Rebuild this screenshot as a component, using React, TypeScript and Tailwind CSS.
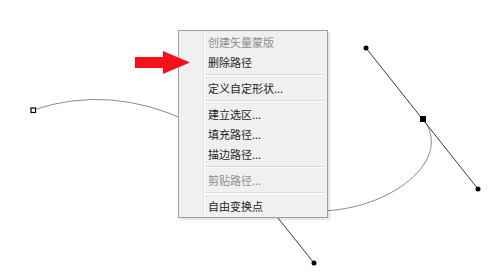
import React from "react";

type Item = { label: string; disabled?: boolean } | { sep: true };

const items: Item[] = [
  { label: "创建矢量蒙版", disabled: true },
  { label: "删除路径" },
  { sep: true },
  { label: "定义自定形状..." },
  { sep: true },
  { label: "建立选区..." },
  { label: "填充路径..." },
  { label: "描边路径..." },
  { sep: true },
  { label: "剪贴路径...", disabled: true },
  { sep: true },
  { label: "自由变换点" },
];

export default function App() {
  return (
    <div
      className="relative w-[500px] h-[278px] overflow-hidden bg-white"
      style={{ fontFamily: '"Noto Sans CJK SC", "Noto Sans", sans-serif' }}
    >
      {/* canvas drawing */}
      <svg className="absolute inset-0" width="500" height="278" viewBox="0 0 500 278">
        <path d="M 33 110 Q 110 84 190 122" fill="none" stroke="#8a8a8a" strokeWidth="1" />
        <path d="M 320 211 C 390 210, 455 160, 423 119" fill="none" stroke="#8a8a8a" strokeWidth="1" />
        <line x1="366" y1="48" x2="478" y2="189" stroke="#3a3a3a" strokeWidth="1" />
        <line x1="250" y1="183" x2="314" y2="263" stroke="#3a3a3a" strokeWidth="1" />
        <circle cx="366" cy="48" r="2.5" fill="#000" />
        <circle cx="478" cy="189" r="2.5" fill="#000" />
        <circle cx="314" cy="263" r="2.5" fill="#000" />
        <rect x="31" y="108" width="4.5" height="4.5" fill="#fff" stroke="#000" strokeWidth="1.2" />
        <rect x="420" y="116" width="6" height="6" fill="#000" />
      </svg>

      {/* context menu */}
      <div className="absolute left-[178px] top-[30px] w-[150px] border border-[#a0a0a0] bg-[#f0f0f0] py-[1px] pl-[1px] pr-[1px] shadow-[2px_2px_2px_rgba(0,0,0,0.12)]">
        <div className="flex">
          <div className="w-[24px] shrink-0 border-r border-[#e2e2e2]" />
          <div className="flex-1 border-l border-white">
            {items.map((it, i) =>
              "sep" in it ? (
                <div key={i} className="h-[6px] flex flex-col justify-center pr-[1px]">
                  <div className="h-[1px] bg-[#dadada]" />
                  <div className="h-[1px] bg-white" />
                </div>
              ) : (
                <div
                  key={i}
                  className={`h-[20px] flex items-center pl-[3px] text-[11px] leading-none ${
                    it.disabled ? "text-[#8e8e8e]" : "text-[#1e1e1e]"
                  }`}
                >
                  {it.label}
                </div>
              )
            )}
          </div>
        </div>
      </div>

      {/* red arrow */}
      <svg className="absolute left-0 top-0" width="500" height="278" viewBox="0 0 500 278">
        <polygon points="135,57 163,57 163,51 190,62.5 163,74 163,68 135,68" fill="#f5101a" />
      </svg>
    </div>
  );
}
